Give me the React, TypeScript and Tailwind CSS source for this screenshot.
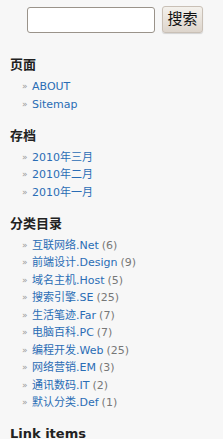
import React from "react";

const pages = ["ABOUT", "Sitemap"];
const archives = ["2010年三月", "2010年二月", "2010年一月"];
const categories: [string, number][] = [
  ["互联网络.Net", 6],
  ["前端设计.Design", 9],
  ["域名主机.Host", 5],
  ["搜索引擎.SE", 25],
  ["生活笔迹.Far", 7],
  ["电脑百科.PC", 7],
  ["编程开发.Web", 25],
  ["网络营销.EM", 3],
  ["通讯数码.IT", 2],
  ["默认分类.Def", 1],
];

const font = { fontFamily: '"DejaVu Sans", "Noto Sans CJK SC", sans-serif' };

function Item({ label, count }: { label: string; count?: number }) {
  return (
    <li className="flex items-center h-[17.5px] pl-[22px] whitespace-nowrap">
      <span className="text-[9px] text-[#999] w-[10px] leading-none">»</span>
      <a href="#" className="text-[#2a6db5] text-[11px] leading-none">{label}</a>
      {count !== undefined && (
        <span className="text-[#777] text-[11px] leading-none ml-[3px]">({count})</span>
      )}
    </li>
  );
}

function Section({ title, children }: { title: string; children?: React.ReactNode }) {
  return (
    <div className="flex flex-col">
      <h2 className="text-[13px] font-bold text-[#222] leading-none pl-[10px]">{title}</h2>
      {children && <ul className="mt-[7px]">{children}</ul>}
    </div>
  );
}

export default function App() {
  return (
    <div className="w-[223px] h-[439px] bg-[#f7f7f7] overflow-hidden" style={font}>
      <div className="flex items-center pt-[6px] pl-[27px] gap-[7px]">
        <input
          className="w-[128px] h-[26px] bg-white border border-[#9a938a] rounded-[3px] outline-none"
          type="text"
        />
        <button className="w-[41px] h-[27px] rounded-[3px] border border-[#c9c0b6] bg-gradient-to-b from-[#f4f1ec] to-[#ddd5cc] text-[15px] text-[#111] leading-none shadow-[0_1px_1px_rgba(0,0,0,0.15)]">
          搜索
        </button>
      </div>
      <div className="flex flex-col gap-[15.5px] mt-[25px]">
        <Section title="页面">
          {pages.map((p) => <Item key={p} label={p} />)}
        </Section>
        <Section title="存档">
          {archives.map((p) => <Item key={p} label={p} />)}
        </Section>
        <Section title="分类目录">
          {categories.map(([l, c]) => <Item key={l} label={l} count={c} />)}
        </Section>
        <Section title="Link items" />
      </div>
    </div>
  );
}
